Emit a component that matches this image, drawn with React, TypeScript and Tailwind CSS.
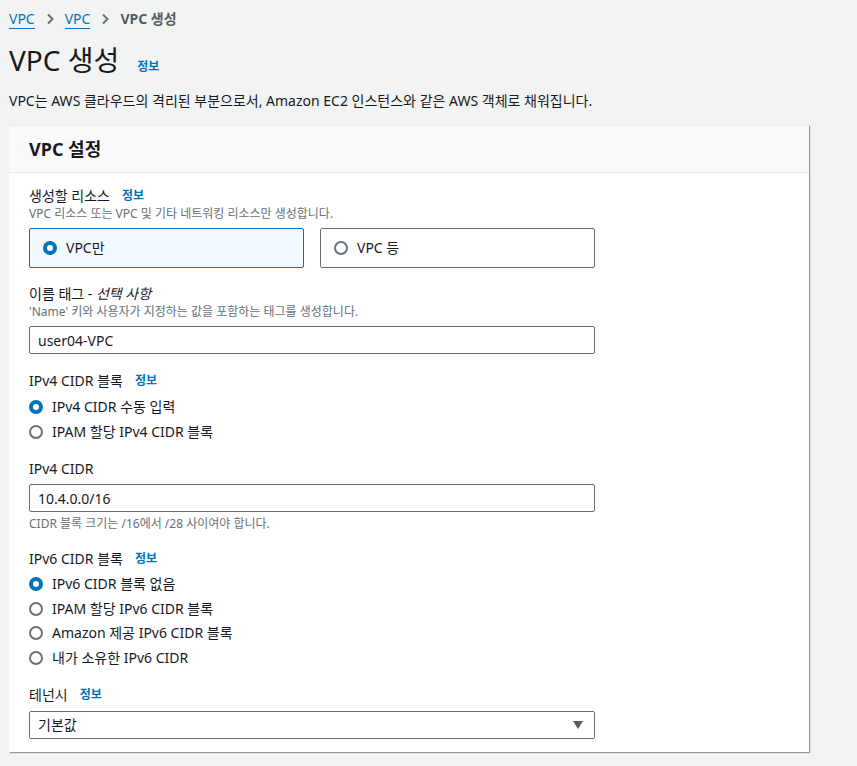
import { useState } from "react"

const font = { fontFamily: '"Noto Sans", "Noto Sans CJK KR", sans-serif' }

function Info() {
  return <span className="ml-3 text-xs font-bold text-[#0073bb]">정보</span>
}

function Radio({ checked }: { checked: boolean }) {
  return checked ? (
    <span className="inline-block h-[14px] w-[14px] shrink-0 rounded-full border-[4px] border-[#0073bb] bg-white" />
  ) : (
    <span className="inline-block h-[14px] w-[14px] shrink-0 rounded-full border-2 border-[#687078] bg-white" />
  )
}

function RadioList({ items, value, onChange }: { items: string[]; value: number; onChange: (i: number) => void }) {
  return (
    <div className="mt-[4px] flex flex-col">
      {items.map((item, i) => (
        <button key={item} onClick={() => onChange(i)} className="flex h-[24.5px] items-center gap-[9px] text-left text-sm text-[#16191f]">
          <Radio checked={i === value} />
          {item}
        </button>
      ))}
    </div>
  )
}

function Chevron() {
  return (
    <span className="mx-[9px] text-[#687078]">
      <svg width="12" height="12" viewBox="0 0 12 12"><path d="M4 1.5 8.5 6 4 10.5" fill="none" stroke="currentColor" strokeWidth="2" /></svg>
    </span>
  )
}

export default function App() {
  const [resource, setResource] = useState(0)
  const [ipv4, setIpv4] = useState(0)
  const [ipv6, setIpv6] = useState(0)
  const [name, setName] = useState("user04-VPC")
  const [cidr, setCidr] = useState("10.4.0.0/16")

  return (
    <div className="min-h-[766px] bg-[#f2f3f3] px-[9px] pt-[9px] text-[#16191f]" style={font}>
      <div className="flex items-center text-sm">
        <a className="border-b border-[#0073bb] leading-[19px] text-[#0073bb]">VPC</a>
        <Chevron />
        <a className="border-b border-[#0073bb] leading-[19px] text-[#0073bb]">VPC</a>
        <Chevron />
        <span className="font-bold text-[#545b64]">VPC 생성</span>
      </div>

      <div className="mt-[13px] flex items-baseline">
        <h1 className="text-[28px] leading-[36px]">VPC 생성</h1>
        <span className="ml-[18px] text-xs font-bold text-[#0073bb]">정보</span>
      </div>
      <p className="mt-[13px] text-sm">VPC는 AWS 클라우드의 격리된 부분으로서, Amazon EC2 인스턴스와 같은 AWS 객체로 채워집니다.</p>

      <div className="mt-[14px] w-[800px] border-t border-[#eaeded] bg-white shadow-[1px_1px_1px_rgba(0,28,36,0.3),1px_1px_1px_rgba(0,28,36,0.15)]">
        <div className="flex h-[47px] items-center border-b border-[#eaeded] bg-[#fafafa] px-5">
          <h2 className="text-lg font-bold">VPC 설정</h2>
        </div>

        <div className="px-5 pb-[13px] pt-[13px]">
          <div className="flex items-center text-sm leading-5">
            생성할 리소스<Info />
          </div>
          <div className="text-xs leading-4 text-[#687078]">VPC 리소스 또는 VPC 및 기타 네트워킹 리소스만 생성합니다.</div>
          <div className="mt-[6px] flex gap-4">
            {["VPC만", "VPC 등"].map((t, i) => (
              <button
                key={t}
                onClick={() => setResource(i)}
                className={
                  i === resource
                    ? "flex h-10 w-[275px] items-center gap-[9px] rounded-[2px] border border-[#0073bb] bg-[#f1faff] px-[13px] text-sm"
                    : "flex h-10 w-[275px] items-center gap-[9px] rounded-[2px] border border-[#687078] bg-white px-[13px] text-sm"
                }
              >
                <Radio checked={i === resource} />
                {t}
              </button>
            ))}
          </div>

          <div className="mt-[16px] text-sm leading-5">
            이름 태그 - <i>선택 사항</i>
          </div>
          <div className="text-xs leading-4 text-[#687078]">'Name' 키와 사용자가 지정하는 값을 포함하는 태그를 생성합니다.</div>
          <input
            value={name}
            onChange={(e) => setName(e.target.value)}
            className="mt-[6px] h-7 w-[566px] rounded-[2px] border border-[#687078] px-2 text-sm outline-none"
          />

          <div className="mt-[17px] flex items-center text-sm leading-5">
            IPv4 CIDR 블록<Info />
          </div>
          <RadioList items={["IPv4 CIDR 수동 입력", "IPAM 할당 IPv4 CIDR 블록"]} value={ipv4} onChange={setIpv4} />

          <div className="mt-[15px] text-sm leading-5">IPv4 CIDR</div>
          <input
            value={cidr}
            onChange={(e) => setCidr(e.target.value)}
            className="mt-[5px] h-7 w-[566px] rounded-[2px] border border-[#687078] px-2 text-sm outline-none"
          />
          <div className="mt-[4px] text-xs leading-4 text-[#687078]">CIDR 블록 크기는 /16에서 /28 사이여야 합니다.</div>

          <div className="mt-[17px] flex items-center text-sm leading-5">
            IPv6 CIDR 블록<Info />
          </div>
          <div className="-mt-[1px]">
            <RadioList
              items={["IPv6 CIDR 블록 없음", "IPAM 할당 IPv6 CIDR 블록", "Amazon 제공 IPv6 CIDR 블록", "내가 소유한 IPv6 CIDR"]}
              value={ipv6}
              onChange={setIpv6}
            />
          </div>

          <div className="mt-[15px] flex items-center text-sm leading-5">
            테넌시<Info />
          </div>
          <div className="mt-[6px] flex h-7 w-[566px] items-center justify-between rounded-[2px] border border-[#687078] px-2 text-sm">
            <span>기본값</span>
            <svg width="12" height="10" viewBox="0 0 12 10" className="mr-[2px]"><path d="M1 1h10L6 9z" fill="#545b64" /></svg>
          </div>
        </div>
      </div>
    </div>
  )
}
